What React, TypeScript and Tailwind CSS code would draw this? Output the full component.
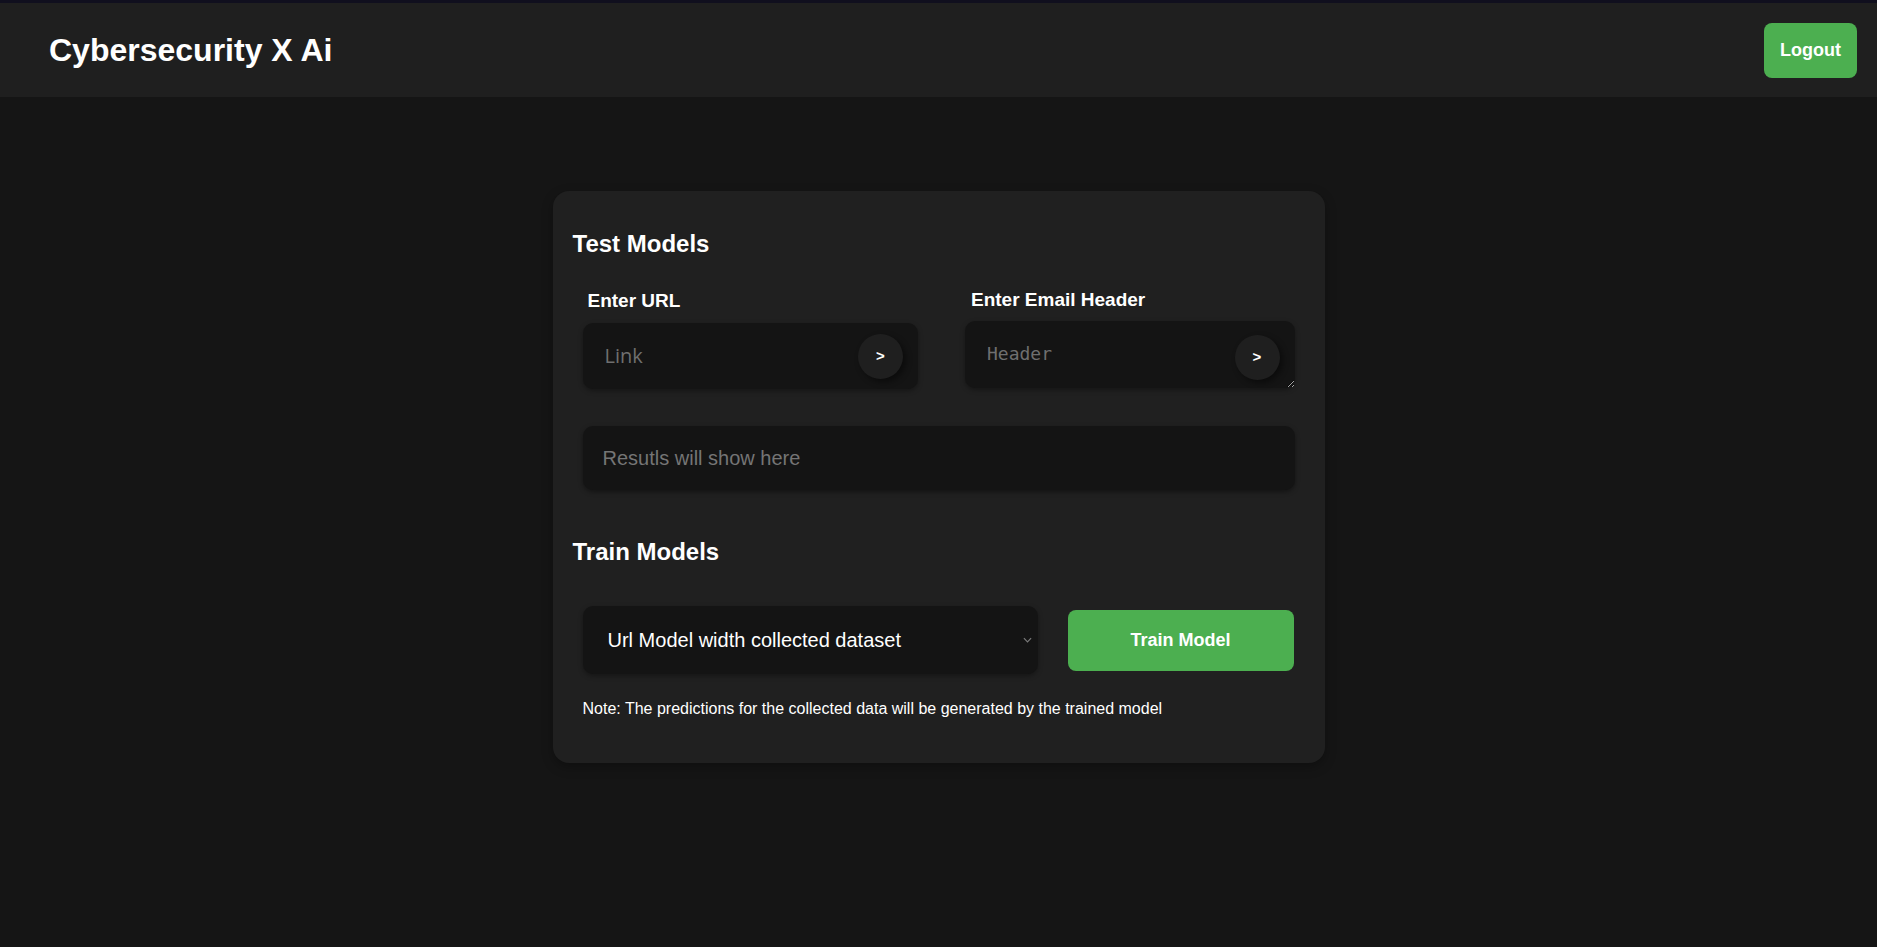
import { useState } from "react"

const sans = "font-['Liberation_Sans',Arial,sans-serif]"

function ArrowButton({ className = "" }: { className?: string }) {
  return (
    <button
      className={`flex h-[45px] w-[45px] shrink-0 items-center justify-center rounded-full bg-[#1f1f1f] text-[15px] font-bold text-white shadow-[3px_3px_6px_rgba(0,0,0,0.45)] ${sans} ${className}`}
    >
      &gt;
    </button>
  )
}

export default function App() {
  const [url, setUrl] = useState("")
  const [header, setHeader] = useState("")
  const [model, setModel] = useState("url")

  return (
    <div className={`min-h-[947px] bg-[#151515] text-white ${sans}`}>
      {/* top strip + navbar */}
      <div className="h-[3px] bg-[#100f1e]" />
      <nav className="flex h-[94px] items-center justify-between bg-[#1f1f1f] pl-[49px] pr-[20px]">
        <h1 className="text-[32px] font-bold leading-[37px]">Cybersecurity X Ai</h1>
        <button className="h-[55px] w-[93px] rounded-[8px] bg-[#4caf50] text-[18px] font-bold text-white">
          Logout
        </button>
      </nav>

      {/* main card */}
      <div className="mx-auto mt-[94px] w-[772px] rounded-[16px] bg-[#202020] p-5 shadow-[0_4px_12px_rgba(0,0,0,0.3)]">
        <h2 className="mt-[19px] text-[24px] font-bold leading-[28px]">Test Models</h2>

        <div className="mt-[32px] flex items-start px-[10px]">
          {/* url */}
          <div className="w-[336px]">
            <label className="block pl-[5px] text-[19px] font-bold leading-[22px]">Enter URL</label>
            <div className="mt-[11px] flex h-[66px] items-center rounded-[10px] bg-[#141414] shadow-[0_2px_5px_rgba(0,0,0,0.35)]">
              <input
                value={url}
                onChange={(e) => setUrl(e.target.value)}
                placeholder="Link"
                className="min-w-0 flex-1 bg-transparent pl-[22px] font-['Open_Sans',sans-serif] text-[20px] text-white outline-none placeholder:text-[#6f6f6f]"
              />
              <ArrowButton className="mr-[15px]" />
            </div>
          </div>

          {/* email header */}
          <div className="ml-[47px] -mt-px w-[330px]">
            <label className="block pl-[6px] text-[19px] font-bold leading-[22px]">Enter Email Header</label>
            <div className="relative mt-[10px]">
              <textarea
                value={header}
                onChange={(e) => setHeader(e.target.value)}
                placeholder="Header"
                className="block h-[67px] w-full resize rounded-[10px] bg-[#141414] pl-[22px] pr-[70px] pt-[22px] font-['DejaVu_Sans_Mono',monospace] text-[18px] leading-[22px] text-white shadow-[0_2px_5px_rgba(0,0,0,0.35)] outline-none [color-scheme:dark] placeholder:text-[#6f6f6f]"
              />
              <ArrowButton className="absolute right-[15px] top-[14px]" />
            </div>
          </div>
        </div>

        {/* results */}
        <div className="mx-[10px] mt-[37px] flex h-[64px] items-center rounded-[10px] bg-[#141414] pl-[20px] text-[20px] text-[#757575] shadow-[0_2px_5px_rgba(0,0,0,0.4)]">
          Resutls will show here
        </div>

        <h2 className="mt-[48px] text-[24px] font-bold leading-[28px]">Train Models</h2>

        <div className="mt-[40px] flex items-center gap-[30px] px-[10px]">
          <div className="relative w-[455px]">
            <select
              value={model}
              onChange={(e) => setModel(e.target.value)}
              className="block h-[68px] w-full appearance-none rounded-[10px] bg-[#141414] pl-[25px] text-[20px] text-white shadow-[0_2px_5px_rgba(0,0,0,0.35)] outline-none"
            >
              <option value="url">Url Model width collected dataset</option>
              <option value="email">Email Model width collected dataset</option>
            </select>
            <svg
              viewBox="0 0 10 6"
              className="pointer-events-none absolute right-[6px] top-[31px] h-[6px] w-[9px]"
              fill="none"
              stroke="#7a7a7a"
              strokeWidth="1.3"
            >
              <path d="M1 1l4 4 4-4" />
            </svg>
          </div>
          <button className="h-[61px] w-[226px] rounded-[8px] bg-[#4caf50] text-[18px] font-bold text-white">
            Train Model
          </button>
        </div>

        <p className="mb-[25px] mt-[26px] px-[10px] text-[16px] leading-[18px]">
          Note: The predictions for the collected data will be generated by the trained model
        </p>
      </div>
    </div>
  )
}
